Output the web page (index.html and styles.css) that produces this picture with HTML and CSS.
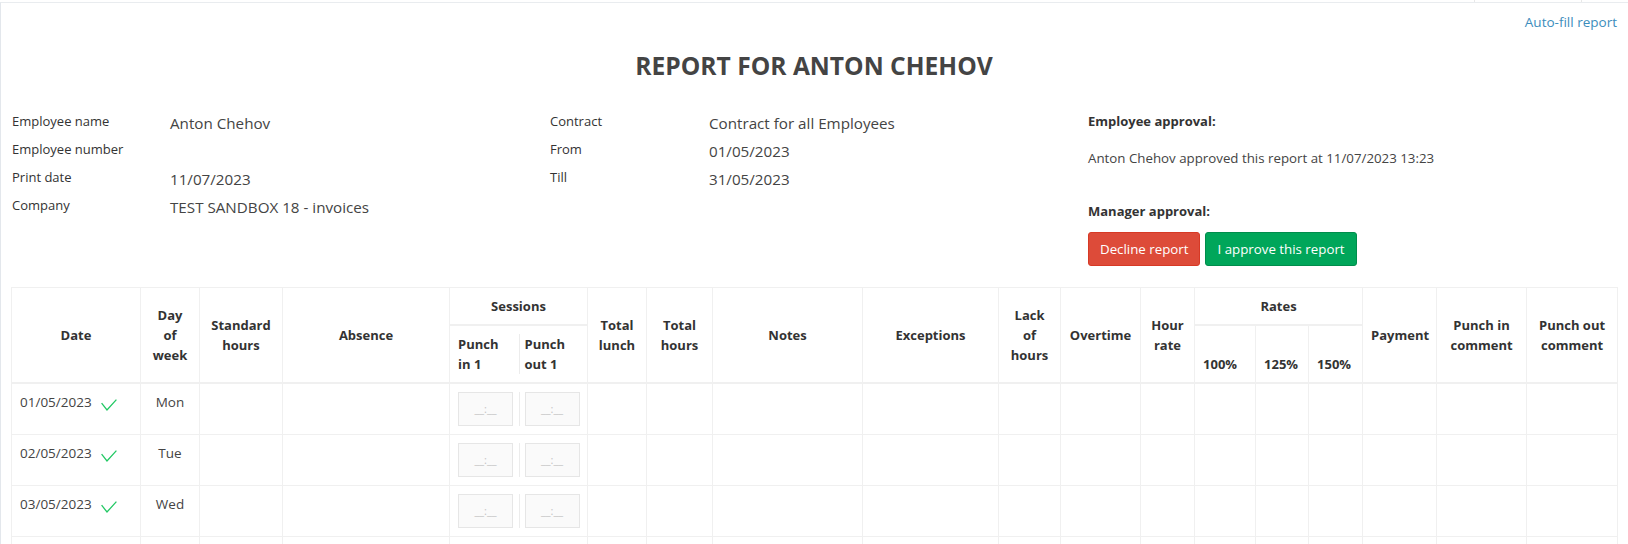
FILE: index.html
```html
<!DOCTYPE html>
<html lang="en">
<head>
<meta charset="utf-8">
<title>Report for Anton Chehov</title>
<link rel="stylesheet" href="styles.css">
</head>
<body>
<div class="topbar"><span></span><span></span><span></span></div>
<div class="page">
  <div class="actions"><a class="autofill" href="#">Auto-fill report</a></div>
  <h1 class="title">REPORT FOR ANTON CHEHOV</h1>

  <div class="info">
    <div class="info-col">
      <div class="field"><span class="label">Employee name</span><span class="value">Anton Chehov</span></div>
      <div class="field"><span class="label">Employee number</span><span class="value"></span></div>
      <div class="field"><span class="label">Print date</span><span class="value">11/07/2023</span></div>
      <div class="field"><span class="label">Company</span><span class="value">TEST SANDBOX 18 - invoices</span></div>
    </div>
    <div class="info-col col2">
      <div class="field"><span class="label">Contract</span><span class="value">Contract for all Employees</span></div>
      <div class="field"><span class="label">From</span><span class="value">01/05/2023</span></div>
      <div class="field"><span class="label">Till</span><span class="value">31/05/2023</span></div>
    </div>
    <div class="info-col approval">
      <h4 class="approval-title">Employee approval:</h4>
      <p class="approval-text">Anton Chehov approved this report at 11/07/2023 13:23</p>
      <h4 class="approval-title manager">Manager approval:</h4>
      <div class="buttons">
        <button class="btn btn-danger" type="button">Decline report</button>
        <button class="btn btn-success" type="button">I approve this report</button>
      </div>
    </div>
  </div>

  <table class="report">
    <colgroup>
      <col style="width:129px"><col style="width:59px"><col style="width:83px"><col style="width:167px">
      <col style="width:69px"><col style="width:69px"><col style="width:59px"><col style="width:66px">
      <col style="width:150px"><col style="width:136px"><col style="width:62px"><col style="width:80px">
      <col style="width:54px"><col style="width:61px"><col style="width:53px"><col style="width:54px">
      <col style="width:74px"><col style="width:90px"><col style="width:91px">
    </colgroup>
    <thead>
      <tr>
        <th rowspan="2">Date</th>
        <th rowspan="2">Day<br>of<br>week</th>
        <th rowspan="2">Standard<br>hours</th>
        <th rowspan="2">Absence</th>
        <th colspan="2" class="group">Sessions</th>
        <th rowspan="2">Total<br>lunch</th>
        <th rowspan="2">Total<br>hours</th>
        <th rowspan="2">Notes</th>
        <th rowspan="2">Exceptions</th>
        <th rowspan="2">Lack<br>of<br>hours</th>
        <th rowspan="2">Overtime</th>
        <th rowspan="2">Hour<br>rate</th>
        <th colspan="3" class="group">Rates</th>
        <th rowspan="2">Payment</th>
        <th rowspan="2">Punch in<br>comment</th>
        <th rowspan="2">Punch out<br>comment</th>
      </tr>
      <tr>
        <th class="sub punch-in">Punch<br>in 1</th>
        <th class="sub punch-out"><div class="sep">Punch<br>out 1</div></th>
        <th class="sub">100%</th>
        <th class="sub">125%</th>
        <th class="sub">150%</th>
      </tr>
    </thead>
    <tbody>
      <tr>
        <td class="date">01/05/2023<svg class="check" width="16" height="12" viewBox="0 0 16 12"><path d="M0.6 4.2 L6 11 L15.4 0.6" /></svg></td>
        <td class="day">Mon</td><td></td><td></td>
        <td class="punch-in"><div class="time">__:__</div></td>
        <td class="punch-out"><div class="sep"><div class="time">__:__</div></div></td>
        <td></td><td></td><td></td><td></td><td></td><td></td><td></td><td></td><td></td><td></td><td></td><td></td><td></td>
      </tr>
      <tr>
        <td class="date">02/05/2023<svg class="check" width="16" height="12" viewBox="0 0 16 12"><path d="M0.6 4.2 L6 11 L15.4 0.6" /></svg></td>
        <td class="day">Tue</td><td></td><td></td>
        <td class="punch-in"><div class="time">__:__</div></td>
        <td class="punch-out"><div class="sep"><div class="time">__:__</div></div></td>
        <td></td><td></td><td></td><td></td><td></td><td></td><td></td><td></td><td></td><td></td><td></td><td></td><td></td>
      </tr>
      <tr>
        <td class="date">03/05/2023<svg class="check" width="16" height="12" viewBox="0 0 16 12"><path d="M0.6 4.2 L6 11 L15.4 0.6" /></svg></td>
        <td class="day">Wed</td><td></td><td></td>
        <td class="punch-in"><div class="time">__:__</div></td>
        <td class="punch-out"><div class="sep"><div class="time">__:__</div></div></td>
        <td></td><td></td><td></td><td></td><td></td><td></td><td></td><td></td><td></td><td></td><td></td><td></td><td></td>
      </tr>
      <tr class="partial">
        <td></td><td></td><td></td><td></td><td class="punch-in"></td><td class="punch-out"></td>
        <td></td><td></td><td></td><td></td><td></td><td></td><td></td><td></td><td></td><td></td><td></td><td></td><td></td>
      </tr>
    </tbody>
  </table>
</div>
</body>
</html>
```

FILE: styles.css
```css
* { box-sizing: border-box; }

html, body {
  margin: 0;
  padding: 0;
  background: #ffffff;
  font-family: "Open Sans", "Noto Sans", sans-serif;
  color: #444444;
}

.topbar {
  display: grid;
  grid-template-columns: 1475px 107px 1fr;
  height: 2px;
}
.topbar span:nth-child(1),
.topbar span:nth-child(2) {
  border-right: 1px solid #e8e8e8;
}

.page {
  border-top: 1px solid #e9ecef;
  border-left: 1px solid #e3e7ec;
  padding: 0 11px 0 10px;
  min-height: 600px;
}

.actions {
  padding-top: 8px;
  text-align: right;
  line-height: 20px;
}
.autofill {
  color: #3c8dbc;
  font-size: 13.5px;
  text-decoration: none;
}

.title {
  margin: 18px 0 0;
  text-align: center;
  font-size: 24.6px;
  line-height: 32px;
  font-weight: 700;
  color: #444444;
}

.info {
  display: grid;
  grid-template-columns: 538px 539px 1fr;
  margin-top: 25px;
}

.field {
  display: flex;
  height: 28px;
  align-items: flex-start;
}
.label {
  width: 159px;
  flex: none;
  font-size: 13px;
  line-height: 28px;
  color: #333333;
  padding-left: 1px;
}
.col2 .label { width: 160px; }
.value {
  font-size: 15.2px;
  line-height: 28px;
  padding-top: 2px;
  color: #444444;
}

.approval-title {
  margin: 0;
  font-size: 13px;
  font-weight: 700;
  line-height: 28px;
  color: #333333;
}
.approval-text {
  margin: 13px 0 0;
  font-size: 13.3px;
  line-height: 20px;
  color: #444444;
}
.approval-title.manager {
  margin-top: 33px;
  line-height: 20px;
}
.buttons {
  display: flex;
  gap: 5px;
  margin-top: 11px;
}
.btn {
  height: 34px;
  padding: 0 11px;
  border: 1px solid transparent;
  border-radius: 3px;
  font-family: inherit;
  font-size: 13.3px;
  color: #ffffff;
  cursor: pointer;
}
.btn-danger {
  background: #dd4b39;
  border-color: #d73925;
}
.btn-success {
  background: #00a65a;
  border-color: #008d4c;
}

.report {
  margin-top: 21px;
  width: 1606px;
  table-layout: fixed;
  border-collapse: collapse;
  border: 1px solid #f0f0f0;
}
.report th,
.report td {
  border: 1px solid #f0f0f0;
  padding: 8px;
  line-height: 20px;
}
.report th {
  font-size: 13px;
  font-weight: 700;
  color: #333333;
  text-align: center;
  vertical-align: middle;
  border-bottom: 2px solid #f0f0f0;
}
.report th.group {
  vertical-align: bottom;
}
.report th.sub {
  text-align: left;
  vertical-align: bottom;
}
.report td {
  font-size: 13.5px;
  color: #444444;
  vertical-align: top;
  height: 51px;
}

.report .punch-in {
  border-right-style: hidden;
}
.report .punch-out {
  border-left-style: hidden;
  padding-left: 0;
}
.sep {
  border-left: 1px solid #ececec;
  padding-left: 5px;
}

.date {
  white-space: nowrap;
}
.check {
  margin-left: 9px;
  vertical-align: -4px;
}
.check path {
  fill: none;
  stroke: #22c864;
  stroke-width: 1.3;
}
.day {
  text-align: center;
}

.time {
  width: 55px;
  height: 34px;
  border: 1px solid #e6e6e6;
  background: #fafafa;
  color: #c4c4c4;
  font-size: 11px;
  line-height: 32px;
  text-align: center;
}
```
